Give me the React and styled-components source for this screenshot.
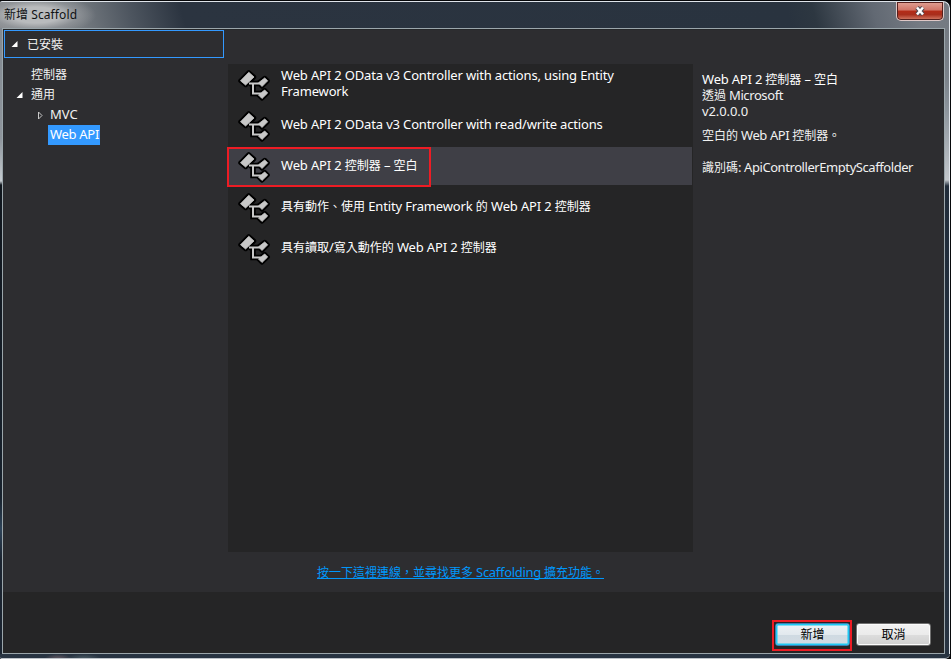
import React from "react";
import styled, { createGlobalStyle, css } from "styled-components";

const Global = createGlobalStyle`
  * { box-sizing: border-box; }
  body { margin: 0; background: #05070a; overflow: hidden; }
  button { font: inherit; padding: 0; }
`;

const Window = styled.div`
  position: relative;
  width: 951px;
  height: 659px;
  display: grid;
  grid-template-rows: 27px 626px 5px;
  grid-template-columns: 2px 943px 6px;
  padding-top: 1px;
  background: #060709;
  font: 12px/16px "Noto Sans", "Noto Sans CJK TC", sans-serif;
  color: #f1f1f1;
`;

const TitleBar = styled.header`
  grid-column: 1 / -1;
  display: flex;
  justify-content: space-between;
  align-items: flex-start;
  border-top: 1px solid #dfe4ea;
  border-right: 1px solid #dfe4ea;
  border-radius: 2px 7px 0 0;
  margin-right: 1px;
  background:
    radial-gradient(ellipse 60px 20px at 36px 13px, #b9bbbd 40%, rgba(155, 158, 162, 0.6) 70%, transparent 100%),
    linear-gradient(75deg, #85898d 0, #747a80 80px, #4d555f 130px, #2b3440 180px, #29333f 765px, #2d3741 790px, #626973 848px, #757b83 890px, #747a82 100%);
`;

const Title = styled.div`
  padding: 4px 0 0 4px;
  color: #101214;
`;

const CloseButton = styled.button`
  width: 48px;
  height: 19px;
  margin-right: 5px;
  display: flex;
  align-items: center;
  justify-content: center;
  border: 1px solid #dfc8c6;
  border-top: 0;
  border-radius: 0 0 5px 5px;
  box-shadow: inset 0 0 0 1px #55201d;
  background: linear-gradient(#e0a195 0, #cf7466 45%, #b42c18 50%, #a92e1c 70%, #d5806a 100%);
`;

const LeftGlass = styled.div`
  background: linear-gradient(#818890 0, #8e959c 110px, #c5cbd0 153px, #10161d 157px, #18222d 75%, #2e4358 80%, #1b2430 85%);
`;

const RightGlass = styled.div`
  border-right: 1px solid #07090b;
  box-shadow: inset -1px 0 #dfe4ea;
  background: linear-gradient(#747a82 0, #7b828a 50px, #8b939b 80px, #c2c7cc 152px, #202c3a 158px, #283442 100%);
`;

const BottomGlass = styled.div`
  grid-column: 1 / -1;
  margin-right: 1px;
  border-bottom: 1px solid #bec4ca;
  border-radius: 0 0 6px 2px;
  background:
    radial-gradient(ellipse 14px 5px at 58px 5px, #6c5f68, transparent),
    radial-gradient(ellipse 18px 5px at 84px 5px, #4f6069, transparent),
    #283442;
`;

const Client = styled.main`
  border: 1px solid #9ba6ab;
  display: grid;
  grid-template-rows: 563px 61px;
  background: #2d2d30;
`;

const Body = styled.section`
  display: grid;
  grid-template-columns: 225px 465px 251px;
  box-shadow: inset 0 1px #252729;
`;

const Sidebar = styled.nav`
  padding: 1px 0 0 1px;
`;

const Installed = styled.div`
  width: 220px;
  height: 28px;
  display: flex;
  align-items: center;
  padding: 0 0 1px 6px;
  border: 1px solid #3399ff;
`;

const Tree = styled.div`
  padding-top: 7px;
`;

const TreeRow = styled.div`
  height: 20px;
  display: flex;
  align-items: center;
  padding-left: ${(p) => p.$indent}px;
`;

const ArrowSlot = styled.span`
  width: ${(p) => p.$width || 16}px;
  height: 8px;
  display: flex;
`;

const NodeLabel = styled.span`
  height: 20px;
  line-height: ${(p) => p.$line || 19}px;
  white-space: nowrap;
  ${(p) => p.$selected && css`
    width: 52px;
    padding-left: 2px;
    background: #3399ff;
    color: #fff;
  `}
`;

const Center = styled.div`
  display: flex;
  flex-direction: column;
  padding-top: 35px;
`;

const List = styled.div`
  height: 488px;
  background: #252526;
`;

const ListRow = styled.div`
  position: relative;
  height: 38px;
  width: 464px;
  margin-bottom: 3px;
  display: flex;
  padding-left: 10px;
  gap: 10px;
  background: ${(p) => (p.$selected ? "#3f3f46" : "transparent")};

  &:first-child { margin-top: 1px; }
`;

const ItemIcon = styled.svg`
  width: 33px;
  height: 33px;
  margin-top: 4px;
  flex: none;
`;

const ItemName = styled.div`
  padding-top: ${(p) => (p.$top ?? 10)}px;
  white-space: pre;
  color: #fff;
`;

const NameLine = styled.div`
  height: 16px;
`;

const Highlight = styled.span`
  position: absolute;
  left: ${(p) => p.$x}px;
  top: ${(p) => p.$y}px;
  width: ${(p) => p.$w}px;
  height: ${(p) => p.$h}px;
  border: 2px solid #ed1c24;
  pointer-events: none;
`;

const MoreLink = styled.a`
  align-self: flex-start;
  height: 15px;
  margin: 12px 0 0 89px;
  line-height: 15px;
  white-space: pre;
  color: #0097fb;
  border-bottom: 1px solid #0097fb;
`;

const Details = styled.aside`
  padding: 42px 0 0 9px;
  white-space: pre;
`;

const Detail = styled.div`
  height: 16px;
  margin-bottom: ${(p) => p.$gap || 0}px;
  color: ${(p) => (p.$strong ? "#fff" : "#f1f1f1")};
`;

const Footer = styled.footer`
  display: flex;
  justify-content: flex-end;
  align-items: flex-start;
  gap: 6px;
  padding: 31px 13px 0 0;
  background: #252526;
`;

const ButtonWrap = styled.div`
  position: relative;
`;

const Button = styled.button`
  display: block;
  width: 75px;
  height: 23px;
  border: 1px solid ${(p) => (p.$primary ? "#3c7fb1" : "#707070")};
  border-radius: 3px;
  box-shadow: inset 0 0 0 ${(p) => (p.$primary ? "1.5px #1fc9f2" : "1px #fbfbfb")};
  color: #000;
  background: ${(p) =>
    p.$primary
      ? "linear-gradient(#edf2f5 0, #e2e9ee 50%, #cfdae2 52%, #d3dce3 100%)"
      : "linear-gradient(#f2f2f2 0, #ebebeb 50%, #dddddd 52%, #cfcfcf 100%)"};
`;

const Latin = styled.span`
  font-size: ${(p) => p.$size}px;
  letter-spacing: ${(p) => p.$spacing}px;
`;

const Han = styled.span`
  font-family: "Noto Sans CJK TC", sans-serif;
`;

function Text({ children, size = 13, spacing = 0 }) {
  return children
    .split(/([\u3000-\u9fff\uff00-\uffef]+)/)
    .filter(Boolean)
    .map((run, i) =>
      /[\u3000-\u9fff\uff00-\uffef]/.test(run) ? (
        <Han key={i} lang="zh-TW">{run}</Han>
      ) : (
        <Latin key={i} $size={size} $spacing={spacing}>{run}</Latin>
      )
    );
}

const OpenArrow = () => (
  <svg width="7" height="8" viewBox="0 0 7 8"><path d="M6.500 1v6h-6z" fill="#fff" /></svg>
);
const ClosedArrow = () => (
  <svg width="6" height="9" viewBox="0 0 6 9"><path d="M1.500 1v7l3.500-3.500z" fill="none" stroke="#c8c8c8" /></svg>
);

function ScaffoldIcon() {
  const shapes = (
    <>
      <path d="M2.500 11.800 10.800 3.300 16 8 7.600 16z" />
      <path d="M20.500 13.800 26.700 9 29.700 11.800 24 17.500z" />
      <path d="M20.500 26 26.700 21 29.700 24 24 29.500z" />
    </>
  );
  const lines = <path d="M11 14.500h13M15 14.500v10h8" />;
  return (
    <ItemIcon viewBox="0 0 33 33">
      <g fill="#000" stroke="#000" strokeWidth="4.500" strokeLinejoin="round">{shapes}</g>
      <g fill="none" stroke="#000" strokeWidth="5.500">{lines}</g>
      <g fill="none" stroke="#c8c8c8" strokeWidth="2">{lines}</g>
      <g fill="#c8c8c8" stroke="#c8c8c8" strokeWidth="0.8" strokeLinejoin="round">{shapes}</g>
    </ItemIcon>
  );
}

const items = [
  { lines: ["Web API 2 OData v3 Controller with actions, using Entity", "Framework"], top: 2 },
  { lines: ["Web API 2 OData v3 Controller with read/write actions"] },
  { lines: ["Web API 2 控制器 – 空白"], selected: true },
  { lines: ["具有動作、使用 Entity Framework 的 Web API 2 控制器"] },
  { lines: ["具有讀取/寫入動作的 Web API 2 控制器"] },
];

export default function App() {
  return (
    <>
      <Global />
      <Window>
        <TitleBar>
          <Title><Text size={12} spacing={0.1}>新增 Scaffold</Text></Title>
          <CloseButton aria-label="Close">
            <svg width="12" height="10" viewBox="0 0 12 10">
              <path d="M3 1.500 9 8.500M9 1.500 3 8.500" stroke="#4e4952" strokeWidth="4.500" />
              <path d="M3 1.500 9 8.500M9 1.500 3 8.500" stroke="#fff" strokeWidth="2.500" />
            </svg>
          </CloseButton>
        </TitleBar>
        <LeftGlass />
        <Client>
          <Body>
            <Sidebar>
              <Installed><ArrowSlot><OpenArrow /></ArrowSlot><Text>已安裝</Text></Installed>
              <Tree>
                <TreeRow $indent={27}><NodeLabel $line={17}><Text>控制器</Text></NodeLabel></TreeRow>
                <TreeRow $indent={12}><ArrowSlot $width={15}><OpenArrow /></ArrowSlot><NodeLabel $line={17}><Text>通用</Text></NodeLabel></TreeRow>
                <TreeRow $indent={33}><ArrowSlot $width={13}><ClosedArrow /></ArrowSlot><NodeLabel><Text>MVC</Text></NodeLabel></TreeRow>
                <TreeRow $indent={44}><NodeLabel $selected><Text spacing={-0.3}>Web API</Text></NodeLabel></TreeRow>
              </Tree>
            </Sidebar>
            <Center>
              <List>
                {items.map((item) => (
                  <ListRow key={item.lines[0]} $selected={item.selected}>
                    <ScaffoldIcon />
                    <ItemName $top={item.top}>
                      {item.lines.map((line) => (
                        <NameLine key={line}><Text spacing={-0.155}>{line}</Text></NameLine>
                      ))}
                    </ItemName>
                    {item.selected && <Highlight $x={-1} $y={0} $w={204} $h={40} />}
                  </ListRow>
                ))}
              </List>
              <MoreLink><Text spacing={-0.3}>按一下這裡連線，並尋找更多 Scaffolding 擴充功能。</Text></MoreLink>
            </Center>
            <Details>
              <Detail $strong><Text spacing={-0.2}>Web API 2 控制器 – 空白</Text></Detail>
              <Detail><Text spacing={-0.4}>透過 Microsoft</Text></Detail>
              <Detail $gap={8}><Text spacing={-0.1}>v2.0.0.0</Text></Detail>
              <Detail $gap={16}><Text spacing={-0.4}>空白的 Web API 控制器。</Text></Detail>
              <Detail><Text spacing={-0.43}>識別碼: ApiControllerEmptyScaffolder</Text></Detail>
            </Details>
          </Body>
          <Footer>
            <ButtonWrap>
              <Button $primary><Text>新增</Text></Button>
              <Highlight $x={-3} $y={-3} $w={80} $h={31} />
            </ButtonWrap>
            <Button><Text>取消</Text></Button>
          </Footer>
        </Client>
        <RightGlass />
        <BottomGlass />
      </Window>
    </>
  );
}
